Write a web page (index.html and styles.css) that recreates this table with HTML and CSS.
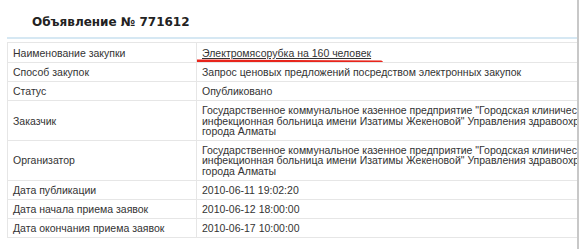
FILE: index.html
```html
<!DOCTYPE html>
<html>
<head>
<meta charset="utf-8">
<link rel="stylesheet" href="styles.css">
</head>
<body>
<div class="frame">
  <div class="page">
    <h1 class="title">Объявление № 771612</h1>
    <div class="rule"></div>
    <table class="info">
      <colgroup><col class="c1"><col class="c2"></colgroup>
      <tr><td>Наименование закупки</td><td class="val"><a class="lnk" href="#">Электромясорубка на 160 человек</a><span class="mark"></span></td></tr>
      <tr><td>Способ закупок</td><td>Запрос ценовых предложений посредством электронных закупок</td></tr>
      <tr><td>Статус</td><td>Опубликовано</td></tr>
      <tr class="multi"><td>Заказчик</td><td>Государственное коммунальное казенное предприятие "Городская клиническая<br>инфекционная больница имени Изатимы Жекеновой" Управления здравоохранения<br>города Алматы</td></tr>
      <tr class="multi"><td>Организатор</td><td>Государственное коммунальное казенное предприятие "Городская клиническая<br>инфекционная больница имени Изатимы Жекеновой" Управления здравоохранения<br>города Алматы</td></tr>
      <tr><td>Дата публикации</td><td>2010-06-11 19:02:20</td></tr>
      <tr><td>Дата начала приема заявок</td><td>2010-06-12 18:00:00</td></tr>
      <tr><td>Дата окончания приема заявок</td><td>2010-06-17 10:00:00</td></tr>
    </table>
  </div>
</div>
</body>
</html>
```
FILE: styles.css
```css
html, body { margin: 0; padding: 0; background: #fff; }
body { font-family: "Liberation Sans", Arial, sans-serif; font-size: 10.5px; color: #333; }
.frame {
  width: 577px;
  height: 249px;
  overflow: hidden;
  border-right: 2px solid #c8c8c8;
}
.page { padding: 15px 0 0 7px; }
.title {
  margin: 0 0 0 25px;
  font-family: "DejaVu Sans", Verdana, sans-serif;
  font-size: 12px;
  font-weight: bold;
  line-height: 14px;
  color: #222;
}
.rule {
  margin-top: 8px;
  height: 2px;
  background: #d6e8f3;
  width: 580px;
}
.info {
  margin-top: 3px;
  border-collapse: collapse;
  table-layout: fixed;
  width: 640px;
  border: 1px solid #e8e8e8;
}
.c1 { width: 189px; }
.info td {
  border: 1px solid #e6e6e6;
  padding: 4px 4px 3px 5px;
  line-height: 11px;
  vertical-align: middle;
  white-space: nowrap;
  overflow: hidden;
}
.info tr:first-child td { padding-top: 5px; }
.info .multi td { line-height: 10.6px; }
.val { position: relative; }
.lnk { color: #333; text-decoration: underline; }
.mark {
  position: absolute;
  left: -4px;
  top: 17px;
  width: 190px;
  height: 4px;
  background: #e8251c;
  border-radius: 2px;
  transform: rotate(0.3deg);
}
```
